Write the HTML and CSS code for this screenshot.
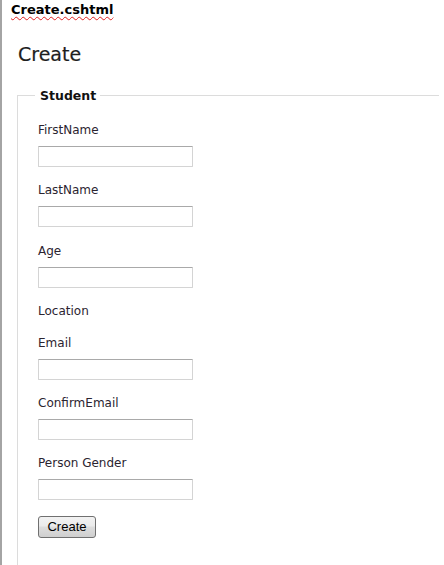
FILE: index.html
```html
<!DOCTYPE html>
<html>
<head>
<meta charset="utf-8">
<link rel="stylesheet" href="styles.css">
</head>
<body>
<div class="page">
  <div class="file-title"><span class="misspelled">Create.cshtml</span></div>
  <h1 class="heading">Create</h1>
  <form class="form">
    <fieldset class="group">
      <legend class="group-legend">Student</legend>
      <div class="field">
        <label class="field-label">FirstName</label>
        <input class="field-input" type="text">
      </div>
      <div class="field">
        <label class="field-label">LastName</label>
        <input class="field-input" type="text">
      </div>
      <div class="field">
        <label class="field-label">Age</label>
        <input class="field-input" type="text">
      </div>
      <div class="field field-empty">
        <label class="field-label">Location</label>
      </div>
      <div class="field">
        <label class="field-label">Email</label>
        <input class="field-input" type="text">
      </div>
      <div class="field">
        <label class="field-label">ConfirmEmail</label>
        <input class="field-input" type="text">
      </div>
      <div class="field">
        <label class="field-label">Person Gender</label>
        <input class="field-input" type="text">
      </div>
      <div class="actions">
        <button class="submit" type="button">Create</button>
      </div>
    </fieldset>
  </form>
</div>
</body>
</html>
```
FILE: styles.css
```css
html, body {
  margin: 0;
  padding: 0;
  background: #ffffff;
  overflow: hidden;
}

.page {
  min-height: 100vh;
  border-left: 2px solid #a4a4a4;
  font-family: "DejaVu Sans", Verdana, sans-serif;
  color: #2b2b2b;
}

.file-title {
  padding: 2px 0 0 9px;
  font-size: 13px;
  line-height: 16px;
  font-weight: bold;
  color: #000;
}

.misspelled {
  text-decoration: underline wavy #e02020;
  text-decoration-thickness: 1px;
  text-underline-offset: 2px;
}

.heading {
  margin: 24px 0 0 16px;
  font-size: 19px;
  line-height: 24px;
  font-weight: normal;
  color: #1e1e1e;
  -webkit-text-stroke: 0.2px #1e1e1e;
}

.form {
  margin: 20px 0 0 15px;
}

.group {
  box-sizing: border-box;
  width: 422px;
  margin: 0;
  padding: 18px 0 40px 20px;
  border: 1px solid #dcdcdc;
  border-right: none;
}

.group-legend {
  margin-left: -3px;
  padding: 2px 4px 0 5px;
  font-size: 12.5px;
  line-height: 16px;
  font-weight: bold;
  color: #111;
}

.field {
  display: flex;
  flex-direction: column;
  align-items: flex-start;
  margin-bottom: 15.3px;
}

.field-empty {
  margin-bottom: 16px;
}

.field-label {
  font-size: 12px;
  line-height: 16px;
  color: #2b2430;
}

.field-input {
  box-sizing: border-box;
  width: 155px;
  height: 21px;
  margin: 8px 0 0 0;
  padding: 0 3px;
  border: 1px solid #d4d4d4;
  border-top-color: #a9a9a9;
  border-radius: 1px;
  background: #fff;
  font-family: "DejaVu Sans", sans-serif;
  font-size: 12px;
}

.actions {
  display: flex;
}

.submit {
  box-sizing: border-box;
  width: 58px;
  height: 22px;
  padding: 0;
  border: 1px solid #707070;
  border-radius: 3px;
  background: linear-gradient(#f2f2f2 0%, #ebebeb 45%, #dddddd 50%, #cfcfcf 100%);
  font-family: "Liberation Sans", Arial, sans-serif;
  font-size: 13px;
  color: #000;
}
```
